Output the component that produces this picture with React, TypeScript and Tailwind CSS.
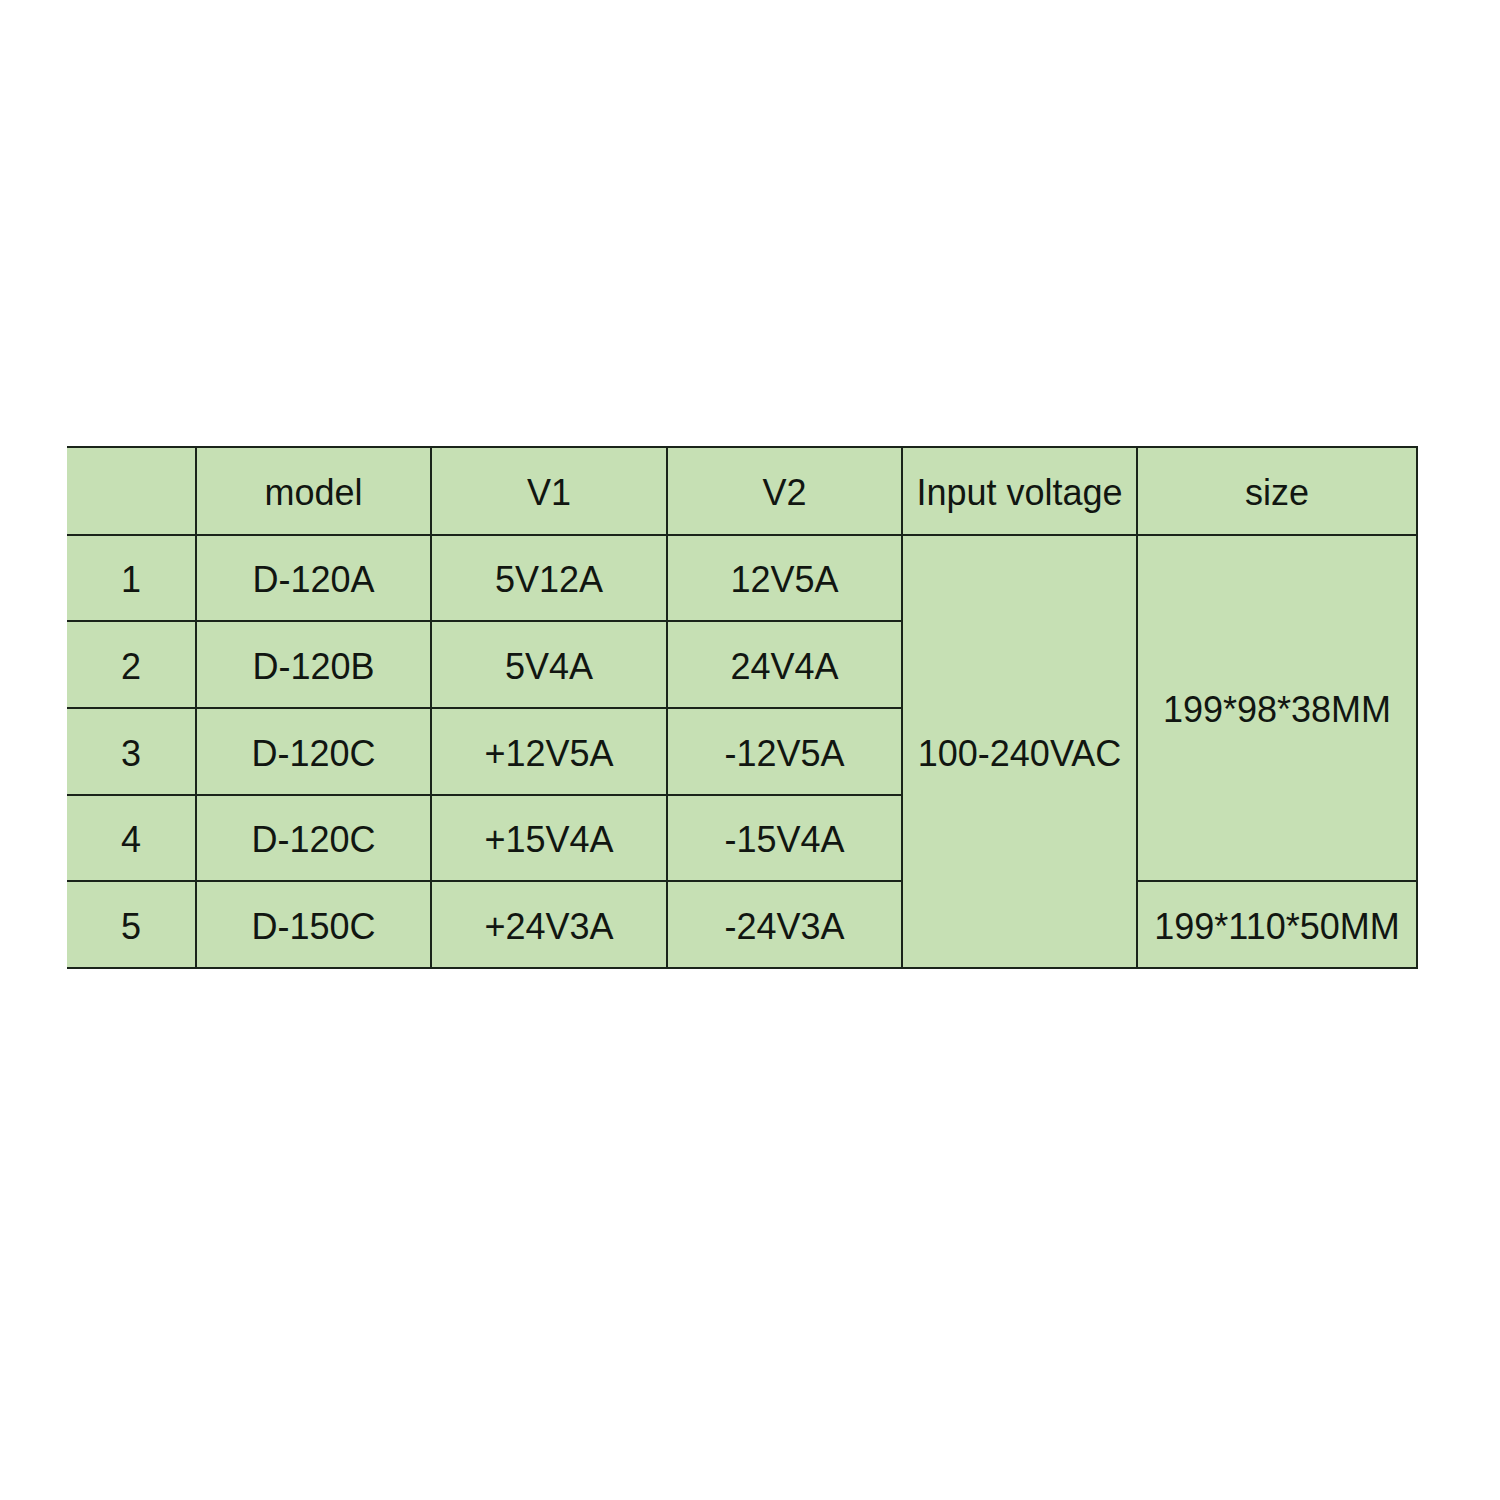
import React from "react";

const cell =
  "flex items-center justify-center pt-[4px] border-r-2 border-b-2 border-[#1a241a] bg-[#c6e0b4] text-[36px] text-[#111611] leading-none";

export default function App() {
  const rows = [
    ["1", "D-120A", "5V12A", "12V5A"],
    ["2", "D-120B", "5V4A", "24V4A"],
    ["3", "D-120C", "+12V5A", "-12V5A"],
    ["4", "D-120C", "+15V4A", "-15V4A"],
    ["5", "D-150C", "+24V3A", "-24V3A"],
  ];
  return (
    <div
      className="w-[1500px] h-[1500px] bg-white pt-[446px] pl-[67px]"
      style={{ fontFamily: '"Liberation Sans", Arial, sans-serif' }}
    >
      <div className="grid w-[1351px] grid-cols-[130px_235px_236px_235px_235px_280px] grid-rows-[88px_86px_87px_87px_86px_87px] border-t-2 border-[#1a241a]">
        <div className={cell}></div>
        <div className={cell}>model</div>
        <div className={cell}>V1</div>
        <div className={cell}>V2</div>
        <div className={cell}>Input voltage</div>
        <div className={cell}>size</div>

        {rows.map((r, i) => (
          <React.Fragment key={i}>
            <div className={cell} style={{ gridColumn: 1, gridRow: i + 2 }}>{r[0]}</div>
            <div className={cell} style={{ gridColumn: 2, gridRow: i + 2 }}>{r[1]}</div>
            <div className={cell} style={{ gridColumn: 3, gridRow: i + 2 }}>{r[2]}</div>
            <div className={cell} style={{ gridColumn: 4, gridRow: i + 2 }}>{r[3]}</div>
          </React.Fragment>
        ))}
        <div className={`${cell} col-start-5 row-start-2 row-span-5`}>100-240VAC</div>
        <div className={`${cell} col-start-6 row-start-2 row-span-4`}>199*98*38MM</div>
        <div className={`${cell} col-start-6 row-start-6`}>199*110*50MM</div>
      </div>
    </div>
  );
}
